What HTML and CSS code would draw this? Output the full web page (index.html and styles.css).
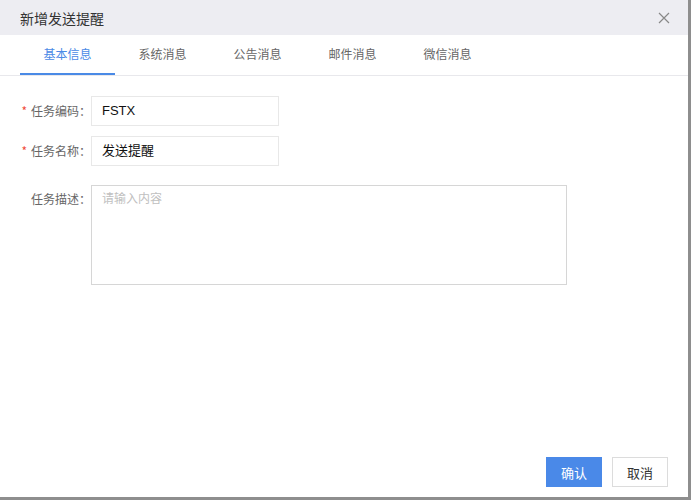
FILE: index.html
```html
<!DOCTYPE html>
<html lang="zh-CN">
<head>
  <meta charset="UTF-8">
  <title>新增发送提醒</title>
  <link rel="stylesheet" href="styles.css">
</head>
<body>
  <div class="dialog">
    <div class="dialog-header">
      <span class="dialog-title">新增发送提醒</span>
      <svg class="close" width="12" height="12" viewBox="0 0 12 12">
        <path d="M1 1 L11 11 M11 1 L1 11" stroke="#888" stroke-width="1.2" fill="none"/>
      </svg>
    </div>
    <div class="tabs">
      <div class="tab active">基本信息</div>
      <div class="tab">系统消息</div>
      <div class="tab">公告消息</div>
      <div class="tab">邮件消息</div>
      <div class="tab">微信消息</div>
    </div>
    <div class="dialog-body">
      <div class="form-row">
        <label class="form-label"><span class="req">*</span>任务编码：</label>
        <div class="input">FSTX</div>
      </div>
      <div class="form-row">
        <label class="form-label"><span class="req">*</span>任务名称：</label>
        <div class="input">发送提醒</div>
      </div>
      <div class="form-row desc-row">
        <label class="form-label">任务描述：</label>
        <div class="textarea"><span class="placeholder">请输入内容</span></div>
      </div>
    </div>
    <div class="dialog-footer">
      <button class="btn btn-primary">确认</button>
      <button class="btn">取消</button>
    </div>
  </div>
</body>
</html>
```

FILE: styles.css
```css
body {
  margin: 0;
  background: #8e8e8e;
  font-family: "Noto Sans CJK SC", "Liberation Sans", sans-serif;
  color: #333;
}
.dialog {
  width: 688px;
  height: 497px;
  background: #fff;
  display: flex;
  flex-direction: column;
}
.dialog-header {
  height: 35px;
  background: #ededf2;
  display: flex;
  align-items: center;
  justify-content: space-between;
  padding: 0 18px 0 20px;
}
.dialog-title {
  font-size: 14px;
  color: #333;
}
.close {
  display: block;
}
.tabs {
  display: flex;
  padding-left: 20px;
  border-bottom: 1px solid #e8e8ec;
  height: 40px;
}
.tab {
  width: 95px;
  text-align: center;
  font-size: 12px;
  line-height: 38px;
  color: #666;
  border-bottom: 2px solid transparent;
}
.tab.active {
  color: #4a8ae6;
  border-bottom-color: #4a8ae6;
}
.dialog-body {
  flex: 1;
  padding: 20px 20px 0 20px;
}
.form-row {
  display: flex;
  margin-bottom: 10px;
}
.desc-row {
  margin-top: 19px;
}
.form-label {
  flex-shrink: 0;
  width: 71px;
  white-space: nowrap;
  text-align: right;
  font-size: 12px;
  line-height: 30px;
  color: #666;
}
.desc-row .form-label {
  line-height: 28px;
}
.req {
  color: #f04c3c;
  margin-right: 4px;
}
.input {
  width: 188px;
  height: 30px;
  box-sizing: border-box;
  border: 1px solid #e8e8e8;
  padding-left: 10px;
  line-height: 28px;
  font-size: 13px;
  font-family: "Liberation Sans", "Noto Sans CJK SC", sans-serif;
  color: #111;
}
.textarea {
  width: 476px;
  height: 100px;
  box-sizing: border-box;
  border: 1px solid #d6d6d6;
  padding: 2px 10px;
  font-size: 12px;
  line-height: 20px;
}
.placeholder {
  color: #c0c0c0;
}
.dialog-footer {
  display: flex;
  justify-content: flex-end;
  gap: 10px;
  padding: 0 20px 10px 0;
}
.btn {
  width: 56px;
  height: 30px;
  border: 1px solid #dcdcdc;
  background: #fff;
  font-family: "Noto Sans CJK SC", sans-serif;
  font-size: 13px;
  color: #333;
  padding: 0;
}
.btn-primary {
  background: #4a89e8;
  border-color: #4a89e8;
  color: #fff;
}
```
